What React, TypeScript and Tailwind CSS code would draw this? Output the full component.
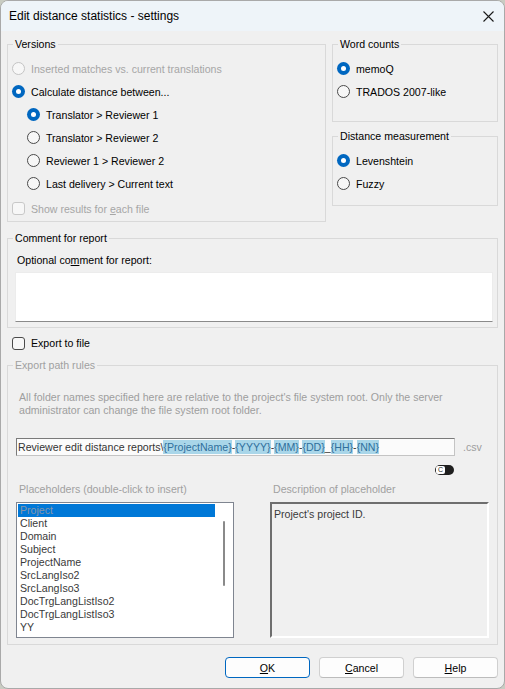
import React from "react";

const Radio = ({ on, dim }: { on?: boolean; dim?: boolean }) =>
  on ? (
    <span className="flex h-[13px] w-[13px] shrink-0 items-center justify-center rounded-full bg-[#0067c0]">
      <span className="h-[5px] w-[5px] rounded-full bg-white" />
    </span>
  ) : (
    <span
      className={`h-[13px] w-[13px] shrink-0 rounded-full border bg-[#f7f7f7] ${
        dim ? "border-[#c4c4c4]" : "border-[#4a4a4a]"
      }`}
    />
  );

const Check = ({ dim }: { dim?: boolean }) => (
  <span
    className={`h-[13px] w-[13px] shrink-0 rounded-[3px] border bg-[#f7f7f7] ${
      dim ? "border-[#c8c8c8]" : "border-[#4a4a4a]"
    }`}
  />
);

// one radio line, 23px tall
const Option = ({
  label,
  on,
  dim,
  indent,
}: {
  label: string;
  on?: boolean;
  dim?: boolean;
  indent?: boolean;
}) => (
  <div className={`flex h-[23px] items-center gap-[6px] ${indent ? "pl-[19px]" : "pl-[4px]"}`}>
    <Radio on={on} dim={dim} />
    <span className={dim ? "text-[#a6a6a6]" : "text-black"}>{label}</span>
  </div>
);

const Legend = ({ children, dim }: { children: React.ReactNode; dim?: boolean }) => (
  <legend className={`ml-[5px] px-[2px] leading-[14px] ${dim ? "text-[#a0a0a0]" : "text-black"}`}>
    {children}
  </legend>
);

const placeholders = [
  "Project",
  "Client",
  "Domain",
  "Subject",
  "ProjectName",
  "SrcLangIso2",
  "SrcLangIso3",
  "DocTrgLangListIso2",
  "DocTrgLangListIso3",
  "YY",
];

const Tag = ({ children }: { children: React.ReactNode }) => (
  <span className="bg-[#a9d6e9] text-[#2f6f9c]">{children}</span>
);

export default function App() {
  return (
    <div className="h-[689px] w-[505px] bg-[#c9ccc2]">
      <div className="flex h-full flex-col overflow-hidden rounded-[8px] border border-[#a9a9a9] bg-[#f0f0f0] font-['Liberation_Sans',Arial,sans-serif] text-[10.6px] leading-[14px] text-black">
        {/* title bar */}
        <div className="flex h-[30px] shrink-0 items-center justify-between bg-[#eef4f9] pl-[8px] pr-[10px]">
          <span className="text-[12px]">Edit distance statistics - settings</span>
          <svg width="11" height="11" viewBox="0 0 11 11">
            <path d="M0.5 0.5 L10.5 10.5 M10.5 0.5 L0.5 10.5" stroke="#1a1a1a" strokeWidth="1.1" />
          </svg>
        </div>

        <div className="px-[6px] pt-[6px]">
          <div className="flex items-start gap-[6px]">
            {/* versions */}
            <fieldset className="h-[185px] w-[319px] border border-[#d9d9d9]">
              <Legend>Versions</Legend>
              <div className="pt-[6px]">
                <Option label="Inserted matches vs. current translations" dim />
                <Option label="Calculate distance between..." on />
                <Option label="Translator > Reviewer 1" on indent />
                <Option label="Translator > Reviewer 2" indent />
                <Option label="Reviewer 1 > Reviewer 2" indent />
                <Option label="Last delivery > Current text" indent />
                <div className="mt-[2px] flex h-[23px] items-center gap-[6px] pl-[4px] text-[#a6a6a6]">
                  <Check dim />
                  <span>
                    Show results for <span className="underline">e</span>ach file
                  </span>
                </div>
              </div>
            </fieldset>

            <div className="flex w-[166px] flex-col">
              <fieldset className="h-[85px] border border-[#d9d9d9]">
                <Legend>Word counts</Legend>
                <div className="pt-[6px]">
                  <Option label="memoQ" on />
                  <Option label="TRADOS 2007-like" />
                </div>
              </fieldset>
              <fieldset className="mt-[7px] h-[77px] border border-[#d9d9d9]">
                <Legend>Distance measurement</Legend>
                <div className="pt-[6px]">
                  <Option label="Levenshtein" on />
                  <Option label="Fuzzy" />
                </div>
              </fieldset>
            </div>
          </div>

          {/* comment */}
          <fieldset className="mt-[9px] h-[97px] border border-[#d9d9d9]">
            <Legend>Comment for report</Legend>
            <div className="pl-[9px] pt-[8px]">
              Optional co<span className="underline">m</span>ment for report:
            </div>
            <div className="ml-[7px] mt-[5px] h-[50px] w-[478px] border border-[#ececec] border-b-[#8a8a8a] bg-white" />
          </fieldset>

          <div className="ml-[5px] mt-[8px] flex h-[14px] items-center gap-[6px]">
            <Check />
            <span>Export to file</span>
          </div>

          {/* export path rules */}
          <fieldset className="mt-[8px] h-[287px] border border-[#d9d9d9]">
            <Legend dim>Export path rules</Legend>
            <div className="pl-[11px] pr-[14px] pt-[19px] leading-[13px] text-[#9e9e9e]">
              All folder names specified here are relative to the project's file system root. Only the server
              administrator can change the file system root folder.
            </div>
            <div className="ml-[8px] mt-[21px] flex items-center gap-[8px]">
              <div className="flex h-[18px] w-[439px] items-center overflow-hidden whitespace-nowrap border border-[#c4c4c4] border-l-[#7a7a7a] border-t-[#7a7a7a] bg-[#fbfbfb] pl-[1px] text-[#333]">
                Reviewer edit distance reports\<Tag>{"{ProjectName}"}</Tag>-<Tag>{"{YYYY}"}</Tag>-
                <Tag>{"{MM}"}</Tag>-<Tag>{"{DD}"}</Tag>_<Tag>{"{HH}"}</Tag>-<Tag>{"{NN}"}</Tag>
              </div>
              <span className="text-[#9e9e9e]">.csv</span>
            </div>
            <div className="mt-[9px] flex justify-end pr-[43px]">
              <div className="flex h-[10px] w-[19px] items-center rounded-full bg-[#1f1f1f] pl-[1px]">
                <span className="flex h-[8px] w-[9px] items-center justify-center rounded-[2px] bg-white text-[7px] leading-[8px] text-[#1f1f1f]">
                  C
                </span>
              </div>
            </div>

            <div className="mt-[7px] flex">
              <div className="ml-[8px] w-[218px]">
                <div className="pl-[3px] text-[#a0a0a0]">Placeholders (double-click to insert)</div>
                <div className="mt-[6px] flex h-[136px] border border-[#7f8590] bg-white p-[1px]">
                  <div className="flex-1">
                    {placeholders.map((p, i) => (
                      <div
                        key={p}
                        className={`h-[13px] pl-[2px] leading-[13px] ${
                          i === 0 ? "bg-[#0078d7] text-[#8596ab]" : "text-[#3a3a3a]"
                        }`}
                      >
                        {p}
                      </div>
                    ))}
                  </div>
                  <div className="flex w-[17px] justify-center pt-[17px]">
                    <div className="h-[65px] w-[2px] rounded-full bg-[#8a8a8a]" />
                  </div>
                </div>
              </div>
              <div className="ml-[36px] w-[219px]">
                <div className="pl-[3px] text-[#a0a0a0]">Description of placeholder</div>
                <div className="mt-[6px] h-[136px] border-2 border-[#6e6e6e] border-b-white border-r-white bg-[#f0f0f0] pl-[2px] pt-[3px] text-[#3a3a3a]">
                  Project's project ID.
                </div>
              </div>
            </div>
          </fieldset>

          {/* buttons */}
          <div className="mt-[12px] flex justify-end gap-[9px]">
            <button className="h-[21px] w-[85px] rounded-[4px] border border-[#0067c0] bg-[#fdfdfd]">
              <span className="underline">O</span>K
            </button>
            <button className="h-[21px] w-[85px] rounded-[4px] border border-[#d0d0d0] border-b-[#bcbcbc] bg-[#fdfdfd]">
              <span className="underline">C</span>ancel
            </button>
            <button className="h-[21px] w-[85px] rounded-[4px] border border-[#d0d0d0] border-b-[#bcbcbc] bg-[#fdfdfd]">
              <span className="underline">H</span>elp
            </button>
          </div>
        </div>
      </div>
    </div>
  );
}
